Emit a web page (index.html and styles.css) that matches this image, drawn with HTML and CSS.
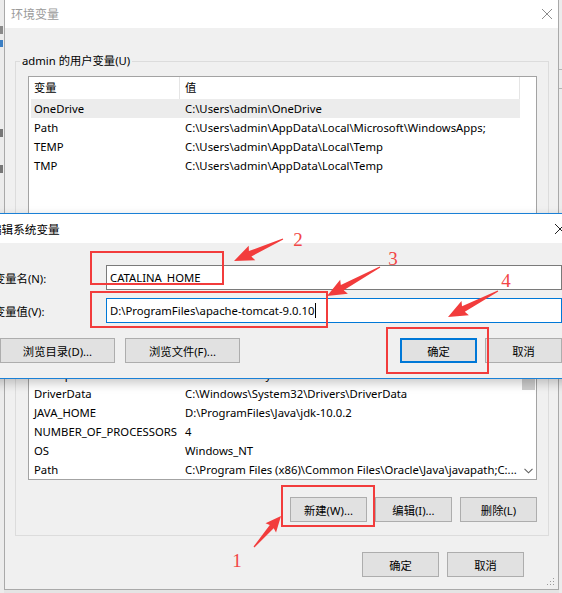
FILE: index.html
```html
<!DOCTYPE html>
<html lang="zh-CN">
<head>
<meta charset="utf-8">
<title>环境变量</title>
<link rel="stylesheet" href="styles.css">
</head>
<body>
<div class="screen">
  <div class="bg-left">
    <span class="frag frag-a"></span>
    <span class="frag frag-b"></span>
    <span class="frag frag-c"></span>
    <span class="frag frag-d"></span>
  </div>

  <div class="env-window">
    <div class="titlebar">
      <span class="title inactive">环境变量</span>
      <svg class="close-x env-x" width="10" height="10" viewBox="0 0 10 10"><path d="M0 0L10 10M10 0L0 10" /></svg>
    </div>
    <div class="env-body">
      <fieldset class="group user-group">
        <legend>admin 的用户变量(U)</legend>
        <div class="listview user-list">
          <div class="lv-header">
            <div class="hc1">变量</div>
            <div class="hc2">值</div>
          </div>
          <div class="lv-row selected"><div class="c1">OneDrive</div><div class="c2">C:\Users\admin\OneDrive</div></div>
          <div class="lv-row"><div class="c1">Path</div><div class="c2">C:\Users\admin\AppData\Local\Microsoft\WindowsApps;</div></div>
          <div class="lv-row"><div class="c1">TEMP</div><div class="c2">C:\Users\admin\AppData\Local\Temp</div></div>
          <div class="lv-row"><div class="c1">TMP</div><div class="c2">C:\Users\admin\AppData\Local\Temp</div></div>
        </div>
        <div class="btn-row">
          <button class="btn">新建(N)...</button>
          <button class="btn">编辑(E)...</button>
          <button class="btn">删除(D)</button>
        </div>
      </fieldset>

      <fieldset class="group sys-group">
        <legend>系统变量(S)</legend>
        <div class="listview sys-list">
          <div class="lv-main">
            <div class="lv-header">
              <div class="hc1">变量</div>
              <div class="hc2">值</div>
            </div>
            <div class="lv-row"><div class="c1">asl.log</div><div class="c2">Destination=file</div></div>
            <div class="lv-row"><div class="c1">CLASSPATH</div><div class="c2">.;%JAVA_HOME%\lib;%JAVA_HOME%\lib\tools.jar</div></div>
            <div class="lv-row"><div class="c1">ComSpec</div><div class="c2">C:\WINDOWS\system32\cmd.exe</div></div>
            <div class="lv-row"><div class="c1">DriverData</div><div class="c2">C:\Windows\System32\Drivers\DriverData</div></div>
            <div class="lv-row"><div class="c1">JAVA_HOME</div><div class="c2">D:\ProgramFiles\Java\jdk-10.0.2</div></div>
            <div class="lv-row"><div class="c1">NUMBER_OF_PROCESSORS</div><div class="c2">4</div></div>
            <div class="lv-row"><div class="c1">OS</div><div class="c2">Windows_NT</div></div>
            <div class="lv-row"><div class="c1">Path</div><div class="c2">C:\Program Files (x86)\Common Files\Oracle\Java\javapath;C:...</div></div>
          </div>
          <div class="vscroll">
            <div class="sb-arrow"></div>
            <div class="sb-thumb"></div>
            <div class="sb-track"></div>
            <div class="sb-arrow">
              <svg width="9" height="6" viewBox="0 0 9 6"><path d="M0.5 0.8L4.5 4.8L8.5 0.8" /></svg>
            </div>
          </div>
        </div>
        <div class="btn-row">
          <button class="btn">新建(W)...</button>
          <button class="btn">编辑(I)...</button>
          <button class="btn">删除(L)</button>
        </div>
      </fieldset>

      <div class="footer">
        <button class="btn">确定</button>
        <button class="btn">取消</button>
      </div>
    </div>
    <svg class="grip" width="8" height="8" viewBox="0 0 8 8">
      <rect x="6" y="0" width="1" height="1"/><rect x="6" y="3" width="1" height="1"/><rect x="3" y="3" width="1" height="1"/>
      <rect x="6" y="6" width="1" height="1"/><rect x="3" y="6" width="1" height="1"/><rect x="0" y="6" width="1" height="1"/>
    </svg>
  </div>

  <div class="bg-right">
    <span class="rline"></span>
    <span class="rline"></span>
  </div>

  <div class="edit-dialog">
    <div class="dlg-titlebar">
      <span class="title dlg-title">编辑系统变量</span>
      <svg class="close-x dlg-x" width="10" height="10" viewBox="0 0 10 10"><path d="M0 0L10 10M10 0L0 10" /></svg>
    </div>
    <div class="dlg-body">
      <div class="field-row">
        <label class="field-label">变量名(N):</label>
        <div class="input">CATALINA_HOME</div>
      </div>
      <div class="field-row">
        <label class="field-label">变量值(V):</label>
        <div class="input focused">D:\ProgramFiles\apache-tomcat-9.0.10<span class="caret"></span></div>
      </div>
      <div class="dlg-buttons">
        <button class="btn wide">浏览目录(D)...</button>
        <button class="btn wide">浏览文件(F)...</button>
        <span class="spacer"></span>
        <button class="btn default">确定</button>
        <button class="btn">取消</button>
      </div>
    </div>
  </div>

  <svg class="annotations" width="562" height="593" viewBox="0 0 562 593">
    <g class="marks">
      <rect x="91" y="252" width="132" height="32"/>
      <rect x="91" y="292" width="236" height="35"/>
      <rect x="387" y="328" width="101" height="45"/>
      <rect x="282" y="486" width="92" height="40"/>
    </g>
    <g class="arrows">
      <g transform="translate(283 239) rotate(155.8)"><polygon points="0,-0.6 36,-3 34,-8 53.7,0 34,8 36,3 0,0.6"/></g>
      <g transform="translate(380 267) rotate(151.3)"><polygon points="0,-0.6 43,-3 41,-8 60.4,0 41,8 43,3 0,0.6"/></g>
      <g transform="translate(498 291) rotate(152.5)"><polygon points="0,-0.6 39,-3 37,-8 56.4,0 37,8 39,3 0,0.6"/></g>
      <g transform="translate(254 547) rotate(-48.9)"><polygon points="0,-0.6 27,-2.6 25.5,-7 41.1,0 25.5,7 27,2.6 0,0.6"/></g>
    </g>
    <g class="nums">
      <text x="237" y="567">1</text>
      <text x="298" y="246">2</text>
      <text x="393" y="265">3</text>
      <text x="506" y="287">4</text>
    </g>
  </svg>
</div>
</body>
</html>
```

FILE: styles.css
```css
* { box-sizing: border-box; }

html, body {
  margin: 0;
  padding: 0;
}

body {
  width: 562px;
  height: 593px;
  overflow: hidden;
  background: #e4e4e4;
  font-family: "Noto Sans", "Noto Sans CJK SC", sans-serif;
  font-size: 11.3px;
  color: #000;
}

.screen {
  position: relative;
  width: 562px;
  height: 593px;
  overflow: hidden;
  display: flex;
  align-items: flex-start;
}

/* windows behind */
.bg-left {
  width: 4px;
  height: 593px;
  flex: none;
  background: #ececec;
  display: flex;
  flex-direction: column;
}
.frag { display: block; width: 3px; }
.frag-a { height: 8px; margin-top: 26px; background: #8a8a8a; }
.frag-b { height: 7px; margin-top: 6px; background: #3b7fc4; }
.frag-c { height: 8px; margin-top: 82px; background: #777; }
.frag-d { height: 8px; margin-top: 28px; background: #777; }

.bg-right {
  flex: 1;
  height: 593px;
  background: #ececec;
  display: flex;
  flex-direction: column;
}
.rline { display: block; height: 1px; background: #b5b5b5; margin-top: 69px; }
.rline + .rline { margin-top: 18px; }

/* main window */
.env-window {
  position: relative;
  flex: none;
  width: 555px;
  height: 590px;
  border: 1px solid #a9a9a9;
  border-top: none;
  background: #f0f0f0;
  display: flex;
  flex-direction: column;
}

.titlebar {
  height: 28px;
  flex: none;
  background: #fff;
  display: flex;
  align-items: center;
  justify-content: space-between;
  padding-left: 6px;
  padding-right: 6px;
}
.title { font-size: 12px; }
.title.inactive { color: #9a9a9a; }
.dlg-title { font-size: 11.6px; }

.close-x path { stroke-width: 1; fill: none; }
.env-x path { stroke: #8c8c8c; }
.dlg-x path { stroke: #222; }

.env-body {
  padding: 25px 9px 0 10px;
  display: flex;
  flex-direction: column;
}

.group {
  margin: 0;
  min-width: 0;
  border: 1px solid #dcdcdc;
  padding: 7px 11px 12px 12px;
}
.group legend {
  padding: 0 2px;
  margin-left: -8px;
  line-height: 16px;
  height: 16px;
}
.sys-group { margin-top: 7px; padding-bottom: 13px; }

.listview {
  background: #fff;
  border: 1px solid #a3a3a3;
  overflow: hidden;
}
.user-list { height: 150px; }
.sys-list { height: 176px; display: flex; }
.lv-main { width: 492px; flex: none; overflow: hidden; }

.lv-header {
  display: flex;
  height: 22px;
  width: 491px;
}
.hc1, .hc2 {
  line-height: 22px;
  border-right: 1px solid #e5e5e5;
  padding-left: 5px;
  white-space: nowrap;
}
.hc1 { width: 151px; }
.hc2 { width: 340px; }

.lv-row {
  display: flex;
  height: 19px;
  line-height: 19px;
  margin-left: 2px;
  width: 489px;
  white-space: nowrap;
}
.lv-row.selected { background: #ececec; }
.lv-row .c1 { width: 148px; padding-left: 3px; flex: none; overflow: hidden; }
.lv-row .c2 { flex: 1; padding-left: 6px; overflow: hidden; }

.vscroll {
  flex: 1;
  display: flex;
  flex-direction: column;
  background: #fff;
  padding: 0 1px;
}
.sb-arrow {
  height: 17px;
  flex: none;
  display: flex;
  align-items: center;
  justify-content: center;
}
.sb-arrow path { stroke: #606060; fill: none; stroke-width: 1.1; }
.sb-thumb { height: 68px; background: #cdcdcd; flex: none; }
.sb-track { flex: 1; }

.btn-row {
  display: flex;
  justify-content: flex-end;
  gap: 8px;
  margin-top: 10px;
}
.sys-group .btn-row { margin-top: 17px; }

.btn {
  width: 77px;
  height: 25px;
  flex: none;
  border: 1px solid #adadad;
  background: #e1e1e1;
  font: inherit;
  color: #000;
  padding: 0;
  margin: 0;
  display: flex;
  align-items: center;
  justify-content: center;
}

.footer {
  display: flex;
  justify-content: flex-end;
  gap: 8px;
  margin-top: 16px;
  padding-right: 25px;
}

.grip {
  position: absolute;
  right: 3px;
  bottom: 3px;
}
.grip rect { fill: #9a9a9a; }

/* edit dialog */
.edit-dialog {
  position: absolute;
  left: -13px;
  top: 213px;
  width: 587px;
  height: 166px;
  border: 1px solid #1a80d6;
  background: #f0f0f0;
  box-shadow: 0 4px 10px rgba(0, 0, 0, 0.22);
  display: flex;
  flex-direction: column;
}

.dlg-titlebar {
  height: 29px;
  flex: none;
  background: #fff;
  display: flex;
  align-items: center;
  justify-content: space-between;
  padding-left: 2px;
  padding-right: 8px;
}

.dlg-body {
  padding: 22px 11px 0 12px;
  display: flex;
  flex-direction: column;
  gap: 8px;
}

.field-row {
  display: flex;
  align-items: center;
  height: 25px;
}
.field-label {
  width: 112px;
  flex: none;
  margin-left: -6px;
  padding-left: 0;
  white-space: nowrap;
}

.input {
  flex: 1;
  height: 25px;
  background: #fff;
  border: 1px solid #7a7a7a;
  padding-left: 3px;
  display: flex;
  align-items: center;
  white-space: nowrap;
}
.input.focused { border-color: #0078d7; }
.caret {
  display: inline-block;
  width: 1px;
  height: 15px;
  background: #000;
  margin-left: 1px;
}

.dlg-buttons {
  display: flex;
  gap: 8px;
  margin-top: 7px;
}
.dlg-buttons .btn.wide { width: 115px; }
.dlg-buttons .btn.wide + .btn.wide { margin-left: 2px; }
.spacer { flex: 1; }
.btn.default {
  border-color: #0078d7;
  box-shadow: inset 0 0 0 1px #0078d7;
}

/* annotations */
.annotations {
  position: absolute;
  left: 0;
  top: 0;
  pointer-events: none;
}
.marks rect { fill: none; stroke: #f23c3c; stroke-width: 2; }
.arrows polygon { fill: #f23c3c; }
.nums text {
  fill: #f24646;
  font-family: "Liberation Serif", serif;
  font-size: 19px;
  text-anchor: middle;
}
```
